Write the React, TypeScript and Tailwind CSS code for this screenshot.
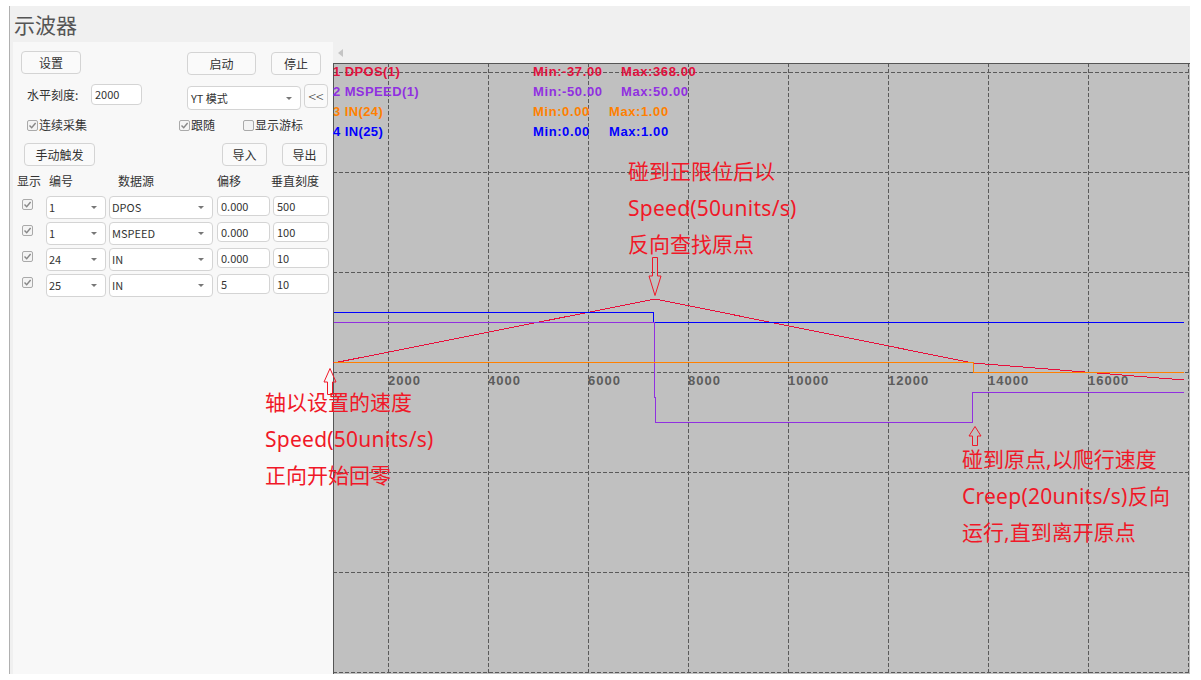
import React from 'react';

const cjk = '"Noto Sans CJK SC", "Liberation Sans", sans-serif';

const legend = [
  { y: 76, color: '#e0103c', name: '1 DPOS(1)', min: 'Min:-37.00', max: 'Max:368.00', maxX: 621 },
  { y: 96, color: '#9030e0', name: '2 MSPEED(1)', min: 'Min:-50.00', max: 'Max:50.00', maxX: 621 },
  { y: 116, color: '#ff8000', name: '3 IN(24)', min: 'Min:0.00', max: 'Max:1.00', maxX: 609 },
  { y: 136, color: '#0000ff', name: '4 IN(25)', min: 'Min:0.00', max: 'Max:1.00', maxX: 609 },
];

const channels = [
  { id: '1', source: 'DPOS', offset: '0.000', scale: '500' },
  { id: '1', source: 'MSPEED', offset: '0.000', scale: '100' },
  { id: '24', source: 'IN', offset: '0.000', scale: '10' },
  { id: '25', source: 'IN', offset: '5', scale: '10' },
];

function Btn({ label, className }: { label: string; className: string }) {
  return (
    <div className={`flex items-center justify-center rounded-[4px] border border-[#d4d4d4] bg-[#fafafa] text-[12px] text-[#333] ${className}`}>
      {label}
    </div>
  );
}

function Field({ value, className }: { value: string; className: string }) {
  return (
    <div className={`flex items-center rounded-[4px] border border-[#d4d4d4] bg-white pl-[3px] text-[11px] text-[#333] ${className}`}>
      {value}
    </div>
  );
}

function Select({ value, className }: { value: string; className: string }) {
  return (
    <div className={`flex items-center justify-between rounded-[4px] border border-[#d4d4d4] bg-white pl-[2px] pr-[8px] text-[11px] text-[#333] ${className}`}>
      <span>{value}</span>
      <span className="h-0 w-0 border-x-[3px] border-t-[3px] border-x-transparent border-t-[#777]" />
    </div>
  );
}

function Check({ checked = true, label }: { checked?: boolean; label?: string }) {
  return (
    <div className="flex items-center gap-[1px] text-[12px] text-[#333]">
      <span className="flex h-[11px] w-[11px] items-center justify-center rounded-[2px] border border-[#aaa] bg-[#f4f4f4]">
        {checked && (
          <svg width="9" height="9" viewBox="0 0 9 9" fill="none">
            <path d="M1.5 4.5 L3.7 6.8 L7.6 2" stroke="#888" strokeWidth="1.4" />
          </svg>
        )}
      </span>
      {label && <span>{label}</span>}
    </div>
  );
}

function Chart() {
  const vert = [388.5, 488.5, 588.5, 688.5, 788.5, 888.5, 988.5, 1088.5, 1188.5];
  const horiz = [72.5, 172.5, 272.5, 372.5, 472.5, 572.5, 672.5];
  const ticks = [2000, 4000, 6000, 8000, 10000, 12000, 14000, 16000];
  return (
    <svg width="857" height="611" viewBox="333 63 857 611" className="block bg-[#c0c0c0]">
      {vert.map((x) => (
        <line key={x} x1={x} x2={x} y1={63} y2={673} stroke="#5a5a5a" strokeDasharray="4 2" shapeRendering="crispEdges" />
      ))}
      {horiz.map((y) => (
        <line key={y} x1={333} x2={1189} y1={y} y2={y} stroke="#5a5a5a" strokeDasharray="4 2" shapeRendering="crispEdges" />
      ))}
      <path d="M333 63.5H1190M333.5 63V674" stroke="#555" strokeWidth="1" shapeRendering="crispEdges" />
      {ticks.map((t, i) => (
        <text key={t} x={388 + i * 100} y={385} fontFamily='"Liberation Sans", sans-serif' fontSize="13" fontWeight="700" letterSpacing="1" fill="#5c5c5c">
          {t}
        </text>
      ))}
      <polyline points="333.5,363 655,299 973,363 1184,380" fill="none" stroke="#e8103c" shapeRendering="crispEdges" />
      <polyline points="333.5,312.5 653.5,312.5 653.5,322.5 1184,322.5" fill="none" stroke="#0000ff" shapeRendering="crispEdges" />
      <polyline points="333.5,322.5 654.5,322.5 654.5,397.5 655.5,397.5 655.5,422.5 972.5,422.5 972.5,392.5 1184,392.5" fill="none" stroke="#9030e0" shapeRendering="crispEdges" />
      <polyline points="333.5,362.5 973.5,362.5 973.5,372.5 1184,372.5" fill="none" stroke="#ff8000" shapeRendering="crispEdges" />
      {legend.map((l) => (
        <g key={l.name} fontFamily='"Liberation Sans", sans-serif' fontSize="13" fontWeight="700" fill={l.color}>
          <text x={333} y={l.y} letterSpacing="0.4">{l.name}</text>
          <text x={533} y={l.y} letterSpacing="0.6">{l.min}</text>
          <text x={l.maxX} y={l.y} letterSpacing="0.6">{l.max}</text>
        </g>
      ))}
    </svg>
  );
}

function Note({ lines, className }: { lines: string[]; className: string }) {
  return (
    <div
      className={`absolute flex flex-col text-[21px] leading-[36.5px] text-[#f01828] whitespace-nowrap ${className}`}
      style={{ fontFamily: '"Noto Sans", "Noto Sans CJK SC", sans-serif' }}
    >
      {lines.map((l) => (
        <span key={l} className={l.includes('units') ? 'tracking-[0.25px]' : ''}>{l}</span>
      ))}
    </div>
  );
}

function Arrow({ className, h, up = true }: { className: string; h: number; up?: boolean }) {
  return (
    <svg width="14" height={h} viewBox={`0 0 14 ${h}`} fill="none" className={`absolute ${className} ${up ? '' : 'rotate-180'}`}>
      <path d={`M7 0.5 L13 ${Math.round(h * 0.5)} H9.5 V${h - 0.5} H4.5 V${Math.round(h * 0.5)} H1 Z`} stroke="#f01828" strokeWidth="1" />
    </svg>
  );
}

export default function App() {
  return (
    <div className="relative h-[680px] w-[1201px] overflow-hidden bg-white pl-[9px] pt-[6px]" style={{ fontFamily: cjk }}>
      <div className="flex h-[668px] w-[1181px] flex-col border-l border-[#b0b0b0] bg-[#f0f0f0]">
        <div className="flex h-[36px] items-center pl-[4px] pt-[1px] text-[21px] leading-none text-[#555]">示波器</div>
        <div className="flex flex-1">
          <div className="ml-[3px] w-[320px] bg-[#f8f8f8] pl-[4px]">
            <div className="mt-[9px] flex items-start">
              <Btn label="设置" className="ml-[4px] h-[23px] w-[60px]" />
              <Btn label="启动" className="ml-[106px] mt-[1px] h-[23px] w-[69px]" />
              <Btn label="停止" className="ml-[15px] mt-[1px] h-[23px] w-[50px]" />
            </div>
            <div className="mt-[9px] flex items-start">
              <span className="ml-[10px] mt-[2px] w-[64px] text-[12px] text-[#333]">水平刻度:</span>
              <Field value="2000" className="h-[21px] w-[51px]" />
              <div className="ml-[45px] mt-[2px] flex h-[24px] w-[114px] items-center justify-between rounded-[4px] border border-[#d4d4d4] bg-white pl-[3px] pr-[8px] text-[11px] text-[#333]">
                <span>YT 模式</span>
                <span className="h-0 w-0 border-x-[3px] border-t-[3px] border-x-transparent border-t-[#777]" />
              </div>
              <div className="ml-[3px] flex h-[24px] w-[24px] items-center justify-center rounded-[4px] border border-[#d4d4d4] bg-[#fafafa] text-[14px] font-light text-[#444]">&lt;&lt;</div>
            </div>
            <div className="mt-[6px] flex h-[18px] items-center">
              <div className="ml-[10px] w-[152px]"><Check label="连续采集" /></div>
              <div className="w-[64px]"><Check label="跟随" /></div>
              <Check checked={false} label="显示游标" />
            </div>
            <div className="mt-[9px] flex">
              <Btn label="手动触发" className="ml-[7px] h-[23px] w-[71px]" />
              <Btn label="导入" className="ml-[127px] h-[23px] w-[45px]" />
              <Btn label="导出" className="ml-[15px] h-[23px] w-[45px]" />
            </div>
            <div className="mt-[6px] flex h-[18px] items-center text-[12px] leading-none text-[#333]">
              <span className="w-[32px]">显示</span>
              <span className="w-[69px]">编号</span>
              <span className="w-[99px]">数据源</span>
              <span className="w-[54px]">偏移</span>
              <span>垂直刻度</span>
            </div>
            <div className="mt-[6px] flex flex-col gap-[3px]">
              {channels.map((c, i) => (
                <div key={i} className="flex h-[23px] items-start">
                  <div className="ml-[5px] mt-[3px] w-[24px]"><Check /></div>
                  <Select value={c.id} className="h-[23px] w-[60px]" />
                  <Select value={c.source} className="ml-[3px] h-[23px] w-[104px]" />
                  <Field value={c.offset} className="ml-[4px] h-[20px] w-[53px]" />
                  <Field value={c.scale} className="ml-[3px] h-[20px] w-[56px]" />
                </div>
              ))}
            </div>
          </div>
          <div className="flex flex-col">
            <div className="flex h-[21px] items-center pl-[5px]">
              <span className="h-0 w-0 border-y-[4px] border-r-[5px] border-y-transparent border-r-[#c4c4c4]" />
            </div>
            <Chart />
          </div>
        </div>
      </div>
      <Note lines={['碰到正限位后以', 'Speed(50units/s)', '反向查找原点']} className="left-[628px] top-[153px]" />
      <Note lines={['轴以设置的速度', 'Speed(50units/s)', '正向开始回零']} className="left-[265px] top-[384px]" />
      <Note lines={['碰到原点,以爬行速度', 'Creep(20units/s)反向', '运行,直到离开原点']} className="left-[962px] top-[441px]" />
      <Arrow h={27} className="left-[323px] top-[368px]" />
      <Arrow h={39} up={false} className="left-[648px] top-[257px]" />
      <Arrow h={20} className="left-[968px] top-[426px]" />
    </div>
  );
}
